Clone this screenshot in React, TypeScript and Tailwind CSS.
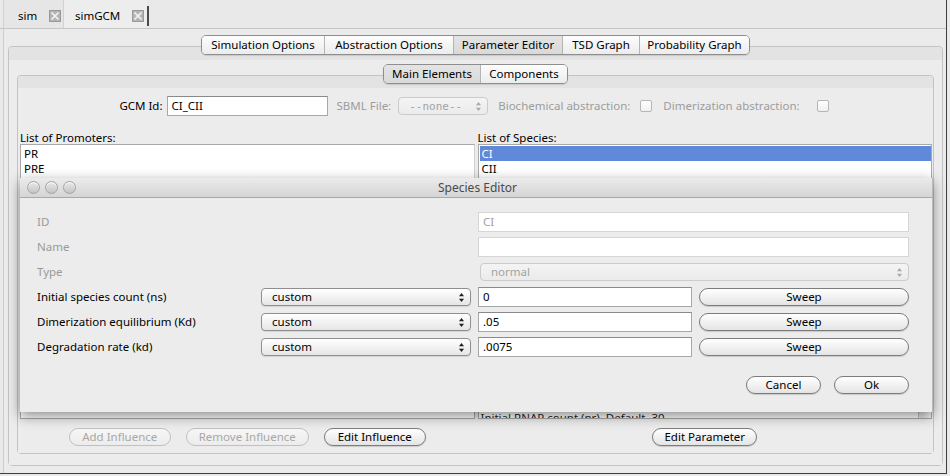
import clsx from "clsx";

/**
 * GCM editor window with the "Species Editor" sheet open on top.
 * Aqua look: segmented tab groups, pill buttons, popup selects.
 */

type Seg = { label: string; w: string };

const outerTabs: Seg[] = [
  { label: "Simulation Options", w: "w-[122px]" },
  { label: "Abstraction Options", w: "w-[129px]" },
  { label: "Parameter Editor", w: "w-[109px]" },
  { label: "TSD Graph", w: "w-[77px]" },
  { label: "Probability Graph", w: "w-[110px]" },
];

const innerTabs: Seg[] = [
  { label: "Main Elements", w: "w-[96px]" },
  { label: "Components", w: "w-[87px]" },
];

function Segmented({ items, active }: { items: Seg[]; active: string }) {
  return (
    <div className="relative z-10 mx-auto flex h-[20px] rounded-[5px] border border-[#8e8e8e] overflow-hidden shadow-[0_1px_1px_rgba(0,0,0,0.12)]">
      {items.map((it, i) => (
        <div
          key={it.label}
          className={clsx(
            "flex items-center justify-center text-[11.5px] text-black",
            it.w,
            i > 0 && "border-l border-[#b4b4b4]",
            it.label === active
              ? "bg-linear-to-b from-[#e4e4e4] to-[#d9d9d9]"
              : "bg-linear-to-b from-[#fdfdfd] to-[#ececec]"
          )}
        >
          {it.label}
        </div>
      ))}
    </div>
  );
}

function Arrows({ dim }: { dim?: boolean }) {
  const c = dim ? "#a9a9a9" : "#1e1e1e";
  return (
    <svg width="7" height="11" viewBox="0 0 7 11">
      <path d="M3.5 1 L6 4.2 H1 Z" fill={c} />
      <path d="M3.5 10 L6 6.8 H1 Z" fill={c} />
    </svg>
  );
}

function Select({ value, disabled, className }: { value: string; disabled?: boolean; className?: string }) {
  return (
    <div
      className={clsx(
        "flex h-[18px] items-center rounded-[4px] border pl-[10px] pr-[5px] text-[11.5px]",
        disabled
          ? "border-[#cbcbcb] bg-linear-to-b from-[#f4f4f4] to-[#ebebeb] text-[#a2a2a2]"
          : "border-[#8f8f8f] bg-linear-to-b from-white to-[#e6e6e6] text-black shadow-[0_1px_1px_rgba(0,0,0,0.1)]",
        className
      )}
    >
      <span className="flex-1 leading-none">{value}</span>
      <Arrows dim={disabled} />
    </div>
  );
}

function Field({ value, disabled, className }: { value: string; disabled?: boolean; className?: string }) {
  return (
    <div
      className={clsx(
        "flex h-[20px] items-center bg-white pl-[4px] text-[11.5px]",
        disabled
          ? "border border-[#d6d6d6] text-[#a0a0a0]"
          : "border border-[#a8a8a8] border-t-[#8a8a8a] text-black",
        className
      )}
    >
      {value}
    </div>
  );
}

function Pill({ label, disabled, className }: { label: string; disabled?: boolean; className?: string }) {
  return (
    <div
      className={clsx(
        "flex h-[18px] items-center justify-center rounded-full border text-[11.5px]",
        disabled
          ? "border-[#c0c0c0] bg-linear-to-b from-[#f7f7f7] to-[#ececec] text-[#a8a8a8]"
          : "border-[#7c7c7c] bg-linear-to-b from-white to-[#e4e4e4] text-black shadow-[0_1px_1px_rgba(0,0,0,0.15)]",
        className
      )}
    >
      {label}
    </div>
  );
}

function CloseBox() {
  return (
    <svg width="12" height="12" viewBox="0 0 12 12" className="ml-[12px]">
      <rect x="0.5" y="0.5" width="11" height="11" fill="#b4b4b4" stroke="#9a9a9a" />
      <path d="M2.5 2.5 L9.5 9.5 M9.5 2.5 L2.5 9.5" stroke="#f4f4f4" strokeWidth="1.6" />
    </svg>
  );
}

function Check() {
  return <div className="h-[12px] w-[12px] rounded-[2px] border border-[#b6b6b6] bg-linear-to-b from-white to-[#f0f0f0]" />;
}

function Dot() {
  return (
    <div className="h-[13px] w-[13px] rounded-full border border-[#a3a3a3] bg-linear-to-b from-[#e9e9e9] to-[#c4c4c4] shadow-[inset_0_1px_1px_rgba(255,255,255,0.8)]" />
  );
}

function SpeciesEditor() {
  const rows = [
    { label: "Initial species count (ns)", value: "0" },
    { label: "Dimerization equilibrium (Kd)", value: ".05" },
    { label: "Degradation rate (kd)", value: ".0075" },
  ];
  return (
    <div className="absolute left-[20px] top-[178px] flex h-[234px] w-[913px] flex-col border-r border-[#b9b9b9] bg-[#ececec] shadow-[0_4px_12px_rgba(0,0,0,0.45)]">
      {/* title bar */}
      <div className="flex h-[20px] items-center border-b border-[#a9a9a9] bg-linear-to-b from-[#ebebeb] to-[#d5d5d5] pl-[7px]">
        <div className="flex gap-[5px]">
          <Dot />
          <Dot />
          <Dot />
        </div>
        <div className="flex-1 pr-[53px] text-center text-[12px] text-[#4a4a4a]">Species Editor</div>
      </div>

      <div className="grid grid-cols-[217px_210px_214px_210px] items-center gap-x-[7px] gap-y-[5px] pl-[17px] pt-[14px]">
        <div className="h-[20px] text-[11.5px] leading-[20px] text-[#9a9a9a]">ID</div>
        <Field value="CI" disabled className="col-span-2 col-start-3" />
        <div className="h-[20px] text-[11.5px] leading-[20px] text-[#9a9a9a]">Name</div>
        <Field value="" disabled className="col-span-2 col-start-3" />
        <div className="h-[20px] text-[11.5px] leading-[20px] text-[#9a9a9a]">Type</div>
        <Select value="normal" disabled className="col-span-2 col-start-3 ml-[2px] pl-[10px]" />
        {rows.map((r) => (
          <div key={r.label} className="contents">
            <div className="h-[20px] text-[11.5px] leading-[20px] text-black">{r.label}</div>
            <Select value="custom" />
            <Field value={r.value} />
            <Pill label="Sweep" />
          </div>
        ))}
      </div>

      <div className="mt-[19px] flex justify-end gap-[13px] pr-[23px]">
        <Pill label="Cancel" className="w-[75px]" />
        <Pill label="Ok" className="w-[75px]" />
      </div>
    </div>
  );
}

export default function App() {
  return (
    <div className="relative h-[476px] w-[950px] overflow-hidden bg-[#e9e9e9] font-['Noto_Sans',sans-serif]">
      <div className="flex h-[474px] w-[947px] flex-col border-b border-r border-[#3e3e3e]">
        {/* document tabs */}
        <div className="flex h-[29px] items-stretch border-b border-[#c6c6c6] pl-[3px]">
          <div className="flex w-[61px] items-center border-l border-r border-[#d2d2d2] bg-[#e6e6e6] pl-[14px] pt-[3px] text-[11.5px] text-black">
            sim
            <CloseBox />
          </div>
          <div className="flex w-[83px] items-center bg-[#ededed] pl-[11px] pt-[3px] text-[11.5px] text-black">
            simGCM
            <CloseBox />
          </div>
          <div className="mt-[6px] h-[20px] w-[2px] bg-[#4a4a4a]" />
        </div>

        {/* tab content */}
        <div className="ml-[3px] flex flex-1 flex-col border-l border-[#cdcdcd] bg-[#ebebeb] pl-[4px] pr-[3px] pt-[6px] pb-[7px]">
          <Segmented items={outerTabs} active="Parameter Editor" />
          <div className="-mt-[9px] flex flex-1 flex-col rounded-[4px] border border-[#c3c3c3]">
            <div className="h-[13px] rounded-t-[4px] bg-[#e3e3e3]" />
            <div className="flex flex-1 flex-col bg-[#ececec] px-[8px] pt-[4px] pb-[11px]">
              <Segmented items={innerTabs} active="Main Elements" />
              <div className="-mt-[9px] flex flex-1 flex-col rounded-[4px] border border-[#c3c3c3]">
                <div className="h-[12px] rounded-t-[4px] bg-[#e3e3e3]" />
                <div className="flex flex-1 flex-col bg-[#ececec] pl-[2px] pr-[1px] pb-[7px]">
                  {/* GCM id row */}
                  <div className="mt-[8px] flex h-[20px] items-center justify-center pr-[4px] text-[11.5px]">
                    <span className="text-black">GCM Id:</span>
                    <Field value="CI_CII" className="ml-[4px] w-[161px]" />
                    <span className="ml-[9px] text-[#9c9c9c]">SBML File:</span>
                    <Select value="--none--" disabled className="ml-[7px] w-[90px] font-['DejaVu_Sans_Mono',monospace] text-[11px]" />
                    <span className="ml-[10px] text-[#9c9c9c]">Biochemical abstraction:</span>
                    <div className="ml-[10px]"><Check /></div>
                    <span className="ml-[11px] text-[#9c9c9c]">Dimerization abstraction:</span>
                    <div className="ml-[17px]"><Check /></div>
                  </div>

                  {/* lists */}
                  <div className="mt-[15px] grid flex-1 grid-cols-2 grid-rows-[13px_112px_6px_13px_minmax(0,1fr)] gap-x-[3px] text-[11.5px]">
                    <div className="leading-[13px]">List of Promoters:</div>
                    <div className="leading-[13px]">List of Species:</div>
                    <div className="border border-[#a9a9a9] border-r-[#cfcfcf] bg-white pl-[1px] pt-[1px] leading-[15px]">
                      <div className="px-[2px]">PR</div>
                      <div className="px-[2px]">PRE</div>
                    </div>
                    <div className="border border-[#a9a9a9] bg-white pl-[1px] pt-[1px] leading-[15px]">
                      <div className="bg-[#6189d9] px-[2px] text-white">CI</div>
                      <div className="px-[2px]">CII</div>
                    </div>
                    <div className="col-span-2" />
                    <div />
                    <div />
                    <div className="border border-[#a9a9a9] bg-white" />
                    <div className="flex overflow-hidden border border-[#a9a9a9] bg-white">
                      <div className="flex flex-1 flex-col justify-end">
                        <div className="-mb-[7px] h-[15px] px-[2px] leading-[15px] text-[#222]">
                          Initial RNAP count (nr), Default, 30
                        </div>
                      </div>
                      <div className="w-[13px] border-l border-[#c4c4c4] bg-linear-to-r from-[#e2e2e2] to-[#f4f4f4]" />
                    </div>
                  </div>

                  {/* action buttons */}
                  <div className="mt-[9px] grid grid-cols-2 gap-x-[3px]">
                    <div className="flex justify-center gap-[15px]">
                      <Pill label="Add Influence" disabled className="w-[102px]" />
                      <Pill label="Remove Influence" disabled className="w-[123px]" />
                      <Pill label="Edit Influence" className="w-[102px]" />
                    </div>
                    <div className="flex justify-center">
                      <Pill label="Edit Parameter" className="w-[105px]" />
                    </div>
                  </div>
                </div>
              </div>
            </div>
          </div>
        </div>
      </div>

      <SpeciesEditor />
    </div>
  );
}
